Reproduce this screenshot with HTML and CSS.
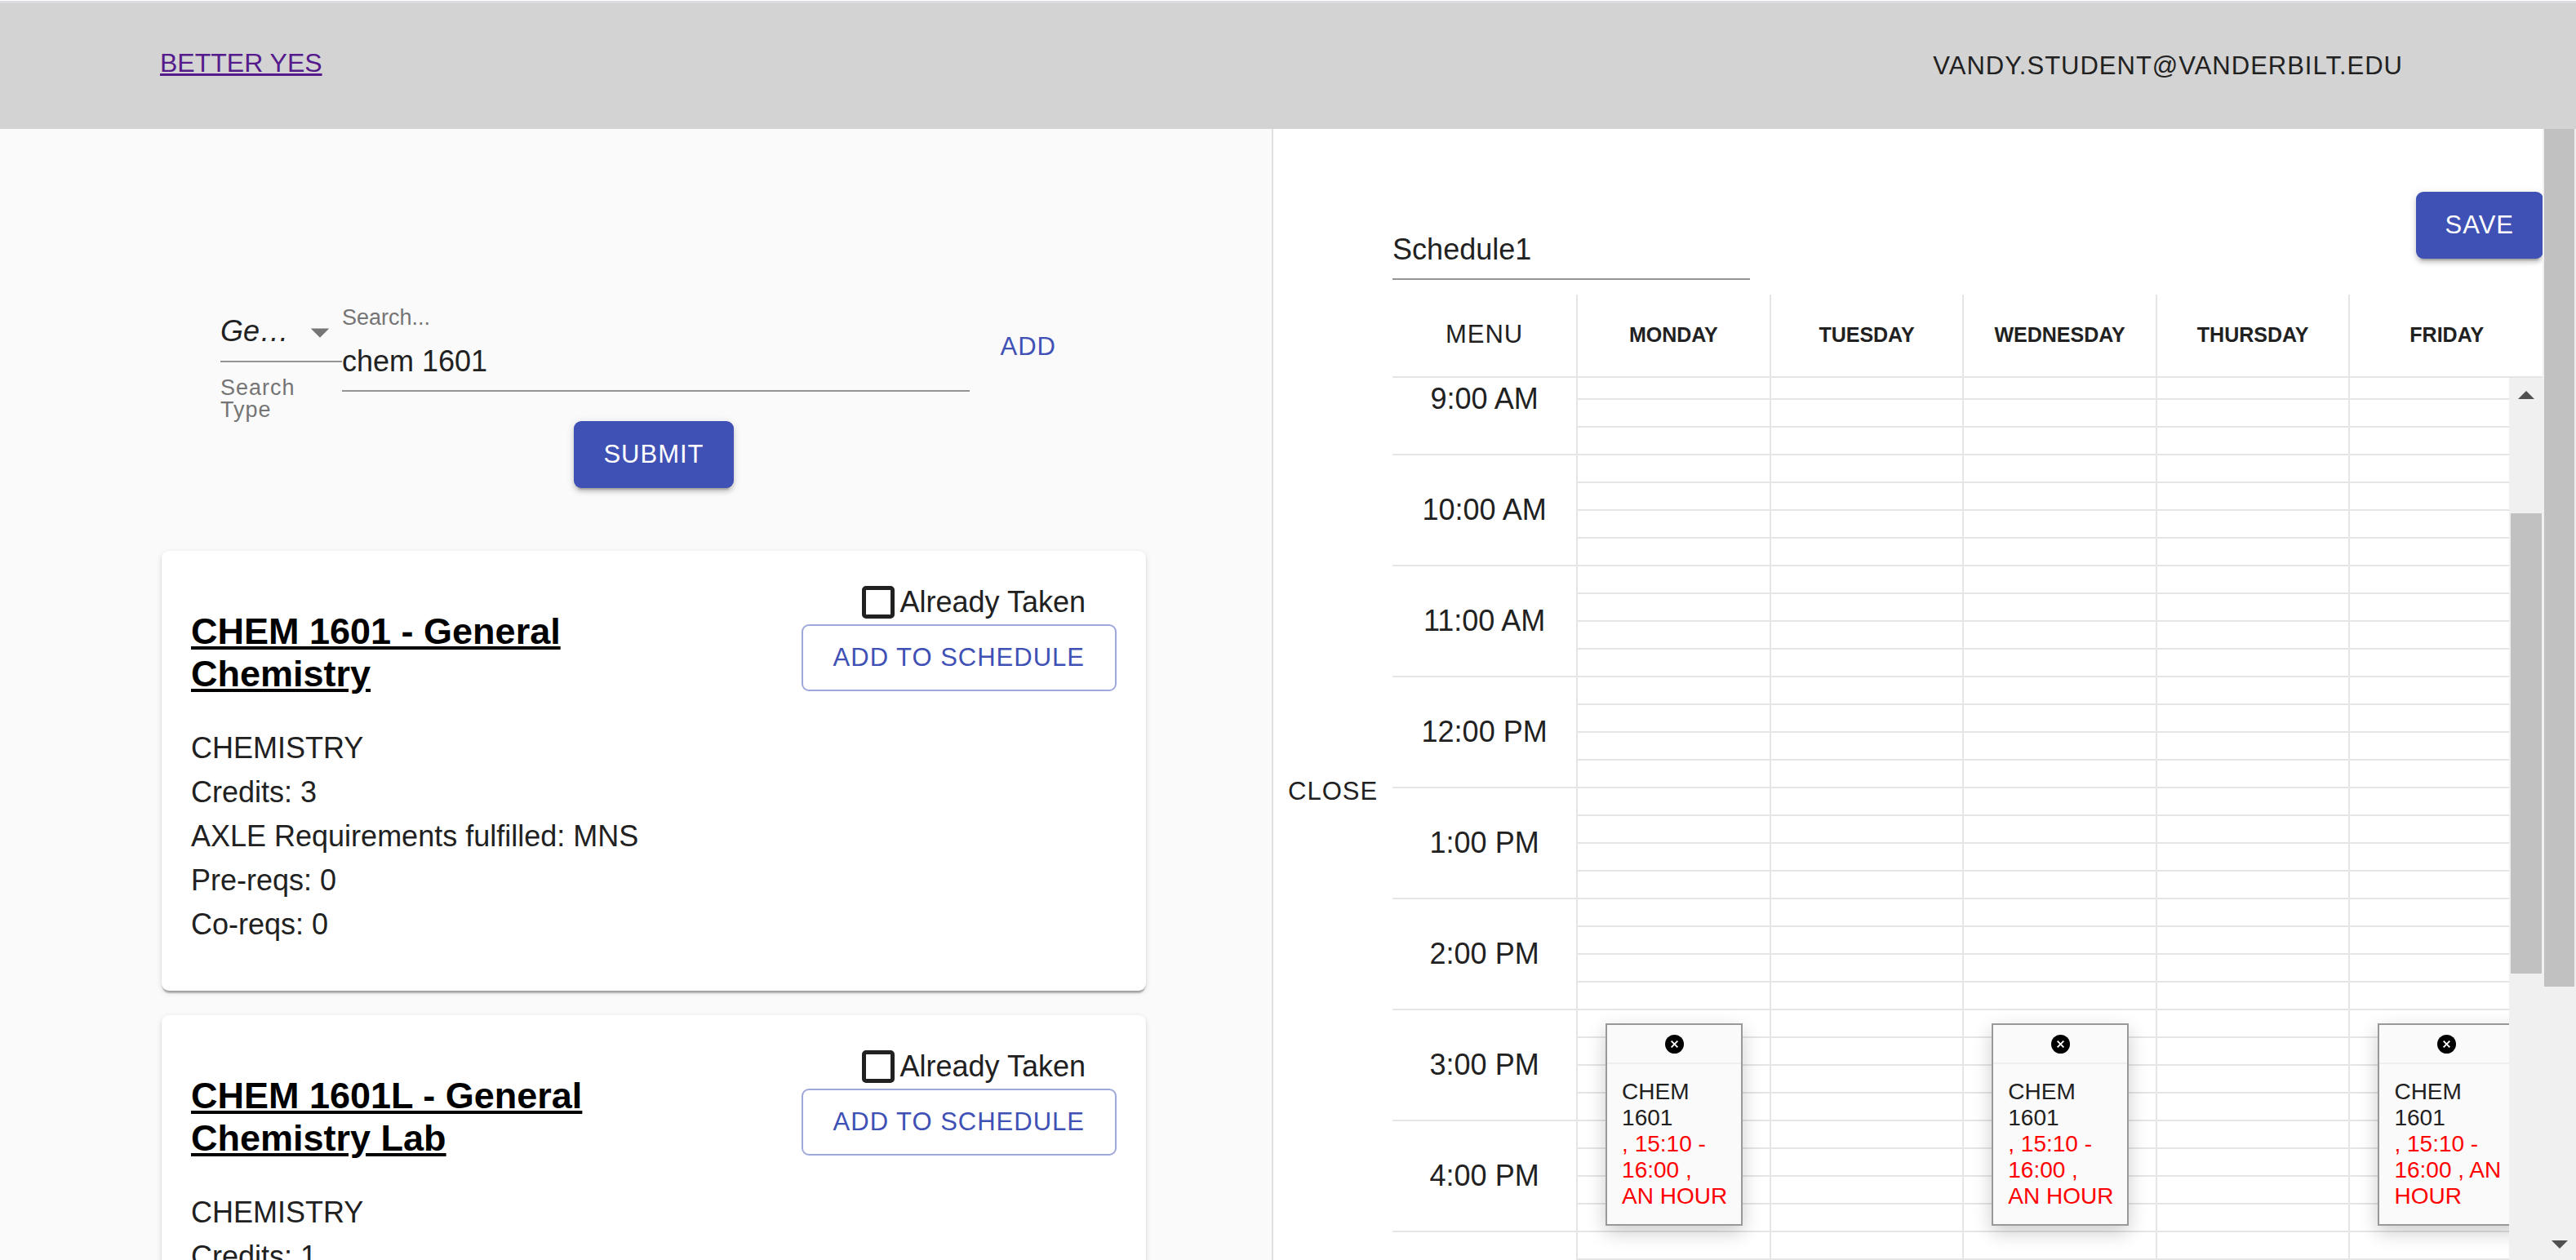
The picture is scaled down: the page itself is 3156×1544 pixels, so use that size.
FILE: index.html
```html
<!DOCTYPE html>
<html lang="en">
<head>
  <meta charset="utf-8">
  <title>Better YES</title>
  <link rel="stylesheet" href="styles.css">
</head>
<body>
  <header class="topbar">
    <a class="brand" href="#">BETTER YES</a>
    <button class="btn btn-text account" type="button">VANDY.STUDENT@VANDERBILT.EDU</button>
  </header>

  <div class="workspace">
    <main class="catalog">
      <form class="search">
        <div class="search-row">
          <div class="type-field">
            <div class="select-wrap">
              <select id="search-type" class="select">
                <option>General</option>
              </select>
              <svg class="select-arrow" viewBox="0 0 24 24" aria-hidden="true"><path d="M7 10l5 5 5-5z"/></svg>
            </div>
            <label class="helper" for="search-type">Search Type</label>
          </div>
          <div class="query-field">
            <label class="query-label" for="query">Search...</label>
            <input id="query" class="input" type="text" value="chem 1601">
          </div>
          <button class="btn btn-text btn-primary-text add" type="button">ADD</button>
        </div>
        <button class="btn btn-filled" type="button">SUBMIT</button>
      </form>

      <section class="results">
        <article class="card">
          <div class="course">
            <h2 class="course-title"><a href="#">CHEM 1601 - General Chemistry</a></h2>
            <p>CHEMISTRY</p>
            <p>Credits: 3</p>
            <p>AXLE Requirements fulfilled: MNS</p>
            <p>Pre-reqs: 0</p>
            <p>Co-reqs: 0</p>
          </div>
          <div class="actions">
            <label class="taken"><input type="checkbox" class="checkbox">Already Taken</label>
            <button class="btn btn-outlined" type="button">ADD TO SCHEDULE</button>
          </div>
        </article>
        <article class="card">
          <div class="course">
            <h2 class="course-title"><a href="#">CHEM 1601L - General Chemistry Lab</a></h2>
            <p>CHEMISTRY</p>
            <p>Credits: 1</p>
          </div>
          <div class="actions">
            <label class="taken"><input type="checkbox" class="checkbox">Already Taken</label>
            <button class="btn btn-outlined" type="button">ADD TO SCHEDULE</button>
          </div>
        </article>
      </section>
    </main>

    <aside class="drawer">
      <button class="btn btn-text close" type="button">CLOSE</button>
      <section class="planner">
        <div class="planner-head">
          <input class="input schedule-name" type="text" value="Schedule1" aria-label="Schedule name">
          <button class="btn btn-filled" type="button">SAVE</button>
        </div>
        <table class="week week-head">
          <thead>
            <tr>
              <th class="time"><button class="btn btn-text" type="button">MENU</button></th>
              <th>MONDAY</th>
              <th>TUESDAY</th>
              <th>WEDNESDAY</th>
              <th>THURSDAY</th>
              <th>FRIDAY</th>
            </tr>
          </thead>
        </table>
        <div class="week-viewport">
          <table class="week week-body">
            <tbody>
              <tr><th class="time">9:00 AM</th><td></td><td></td><td></td><td></td><td></td></tr>
              <tr><th class="time">10:00 AM</th><td></td><td></td><td></td><td></td><td></td></tr>
              <tr><th class="time">11:00 AM</th><td></td><td></td><td></td><td></td><td></td></tr>
              <tr><th class="time">12:00 PM</th><td></td><td></td><td></td><td></td><td></td></tr>
              <tr><th class="time">1:00 PM</th><td></td><td></td><td></td><td></td><td></td></tr>
              <tr><th class="time">2:00 PM</th><td></td><td></td><td></td><td></td><td></td></tr>
              <tr>
                <th class="time">3:00 PM</th>
                <td class="booked">
                  <div class="event">
                    <button class="event-remove" type="button" aria-label="Remove"><svg viewBox="0 0 24 24" aria-hidden="true"><circle cx="12" cy="12" r="12"/><path d="M8 8l8 8M16 8l-8 8"/></svg></button>
                    <div class="event-text">CHEM 1601 <span class="event-time">, 15:10 - 16:00 , AN HOUR</span></div>
                  </div>
                </td>
                <td></td>
                <td class="booked">
                  <div class="event">
                    <button class="event-remove" type="button" aria-label="Remove"><svg viewBox="0 0 24 24" aria-hidden="true"><circle cx="12" cy="12" r="12"/><path d="M8 8l8 8M16 8l-8 8"/></svg></button>
                    <div class="event-text">CHEM 1601 <span class="event-time">, 15:10 - 16:00 , AN HOUR</span></div>
                  </div>
                </td>
                <td></td>
                <td class="booked">
                  <div class="event event-last">
                    <button class="event-remove" type="button" aria-label="Remove"><svg viewBox="0 0 24 24" aria-hidden="true"><circle cx="12" cy="12" r="12"/><path d="M8 8l8 8M16 8l-8 8"/></svg></button>
                    <div class="event-text">CHEM 1601 <span class="event-time">, 15:10 - 16:00 , AN HOUR</span></div>
                  </div>
                </td>
              </tr>
              <tr><th class="time">4:00 PM</th><td></td><td></td><td></td><td></td><td></td></tr>
              <tr><th class="time"></th><td></td><td></td><td></td><td></td><td></td></tr>
              <tr><th class="time"></th><td></td><td></td><td></td><td></td><td></td></tr>
            </tbody>
          </table>
          <div class="scrollbar scrollbar-inner" aria-hidden="true">
            <svg class="scroll-arrow" viewBox="0 0 20 10"><path d="M10 0L20 10H0z"/></svg>
            <div class="thumb"></div>
          </div>
        </div>
      </section>
      <div class="scrollbar scrollbar-outer" aria-hidden="true">
        <div class="thumb"></div>
        <svg class="scroll-arrow" viewBox="0 0 20 10"><path d="M0 0H20L10 10z"/></svg>
      </div>
    </aside>
  </div>
</body>
</html>
```
FILE: styles.css
```css
* {
  box-sizing: border-box;
}

body {
  display: flex;
  flex-direction: column;
  height: 100vh;
  margin: 0;
  overflow: hidden;
  background: #fafafa;
  color: #212121;
  font-family: "Liberation Sans", Arial, sans-serif;
  font-size: 36px;
  line-height: 54px;
}

button,
input,
select {
  font: inherit;
  color: inherit;
}

/* Buttons */
.btn {
  flex: none;
  height: 82px;
  padding: 0 36px;
  border: 0;
  border-radius: 9px;
  background: none;
  font-size: 31px;
  font-weight: 400;
  line-height: 54px;
  letter-spacing: 1px;
  white-space: nowrap;
}

.btn-text {
  padding: 0 18px;
}

.btn-primary-text {
  color: #3f51b5;
}

.btn-filled {
  background: #3f51b5;
  color: #fff;
  box-shadow: 0 7px 2px -5px rgba(0, 0, 0, .2), 0 5px 5px rgba(0, 0, 0, .14), 0 2px 11px rgba(0, 0, 0, .12);
}

.btn-outlined {
  padding: 0 37px;
  border: 2px solid #9fa8da;
  color: #3f51b5;
}

/* Top bar */
.topbar {
  display: flex;
  flex: none;
  align-items: center;
  justify-content: space-between;
  height: 158px;
  padding: 3px 194px 0 196px;
  border-top: 1px solid #fff;
  background: #d3d3d3;
  box-shadow: inset 0 3px 0 #dadce0;
}

.brand {
  padding-bottom: 8px;
  color: #551a8b;
  font-size: 32px;
}

.workspace {
  display: grid;
  flex: 1;
  grid-template-columns: 1558fr 1598fr;
  min-height: 0;
  overflow: hidden;
}

/* Course catalog */
.catalog {
  padding: 212px 154px 0 198px;
}

.search {
  display: flex;
  flex-direction: column;
  align-items: center;
}

.search-row {
  display: flex;
  align-items: flex-start;
  align-self: stretch;
  padding: 0 92px 0 72px;
}

.type-field {
  flex: none;
  width: 149px;
}

.select-wrap {
  position: relative;
}

.select {
  display: block;
  width: 100%;
  height: 74px;
  padding: 0 54px 0 0;
  border: 0;
  border-bottom: 2px solid #949494;
  border-radius: 0;
  background: none;
  font-style: italic;
  text-overflow: ellipsis;
  appearance: none;
}

.select-arrow {
  position: absolute;
  top: 10px;
  right: 0;
  width: 54px;
  height: 54px;
  fill: #757575;
  pointer-events: none;
}

.helper {
  display: block;
  width: 100px;
  margin-top: 18px;
  color: #757575;
  font-size: 27px;
  line-height: 27px;
  letter-spacing: 1px;
}

.query-field {
  display: flex;
  flex: 1;
  flex-direction: column;
  gap: 6px;
  padding-top: 6px;
}

.query-label {
  color: #757575;
  font-size: 27px;
  line-height: 27px;
}

.input {
  width: 100%;
  height: 71px;
  padding: 0 0 2px;
  border: 0;
  border-bottom: 2px solid #949494;
  background: none;
}

.add {
  margin: 14px 0 0 20px;
}

/* Result cards */
.results {
  display: flex;
  flex-direction: column;
  gap: 30px;
  margin-top: 77px;
}

.card {
  display: flex;
  justify-content: space-between;
  padding: 36px 36px 54px;
  border-radius: 9px;
  background: #fff;
  box-shadow: 0 5px 2px -2px rgba(0, 0, 0, .2), 0 2px 2px rgba(0, 0, 0, .14), 0 2px 7px rgba(0, 0, 0, .12);
}

.course {
  width: 50%;
}

.course p {
  margin: 0;
  white-space: nowrap;
}

.course-title {
  margin: 37px 0 38px;
  font-size: 45px;
  line-height: 52px;
}

.course-title a {
  color: #000;
}

.actions {
  display: flex;
  flex-direction: column;
  align-items: flex-end;
}

.taken {
  display: flex;
  align-items: center;
  padding-right: 38px;
}

.checkbox {
  width: 40px;
  height: 40px;
  margin: 7px;
  border: 5px solid #212121;
  border-radius: 5px;
  appearance: none;
}

/* Schedule drawer */
.drawer {
  display: flex;
  align-items: center;
  position: relative;
  height: max-content;
  padding-right: 40px;
  border-left: 2px solid #e0e0e0;
  background: #fff;
}

.planner {
  flex: 1;
  padding-top: 77px;
}

.planner-head {
  display: flex;
  justify-content: space-between;
  height: 108px;
  margin-bottom: 18px;
}

.schedule-name {
  align-self: flex-end;
  width: 438px;
}

.week {
  width: 100%;
  border-spacing: 0;
  table-layout: fixed;
}

.week th,
.week td {
  padding: 0;
  border-right: 2px solid #e5e5e5;
}

.week th:last-child,
.week td:last-child {
  border-right: 0;
}

.week .time {
  width: 227px;
}

.week-head th {
  height: 102px;
  padding-bottom: 2px;
  border-bottom: 2px solid #e5e5e5;
  font-size: 25px;
}

.week-viewport {
  position: relative;
  overflow: hidden;
}

.week-body {
  margin-top: -41px;
}

.week-body th {
  height: 136px;
  border-bottom: 2px solid #e5e5e5;
  font-weight: 400;
}

.week-body td {
  background: repeating-linear-gradient(to bottom, #fff 0 32px, #e5e5e5 32px 34px);
}

.booked {
  position: relative;
}

.event {
  position: absolute;
  top: 16px;
  left: 34px;
  width: 168px;
  border: 2px solid #999;
  background: #fafafa;
  box-shadow: 0 8px 22px rgba(0, 0, 0, .2);
}

.event-last {
  width: 180px;
}

.event-remove {
  display: flex;
  align-items: center;
  justify-content: center;
  width: 164px;
  height: 48px;
  padding: 0;
  border: 0;
  border-bottom: 2px solid #eee;
  background: none;
}

.event-last .event-remove {
  width: 100%;
  padding-right: 12px;
}

.event-remove svg {
  width: 23px;
  height: 23px;
}

.event-remove path {
  fill: none;
  stroke: #fff;
  stroke-width: 2;
}

.event-text {
  padding: 18px 16px 18px 18px;
  font-size: 28px;
  line-height: 32px;
}

.event-time {
  display: block;
  color: #f00;
}

/* Scroll bars */
.scrollbar {
  position: absolute;
  top: 0;
  right: 0;
  background: #f0f0f0;
}

.scrollbar .thumb {
  margin: 0 2px;
  background: #c1c1c1;
}

.scroll-arrow {
  position: absolute;
  left: 11px;
  width: 20px;
  height: 10px;
  fill: #505050;
}

.scrollbar-inner {
  bottom: 0;
  width: 42px;
  padding-top: 166px;
}

.scrollbar-inner .thumb {
  height: 564px;
}

.scrollbar-inner .scroll-arrow {
  top: 16px;
}

.scrollbar-outer {
  width: 41px;
  height: calc(100vh - 158px);
}

.scrollbar-outer .thumb {
  height: 1051px;
}

.scrollbar-outer .scroll-arrow {
  bottom: 14px;
}
```
